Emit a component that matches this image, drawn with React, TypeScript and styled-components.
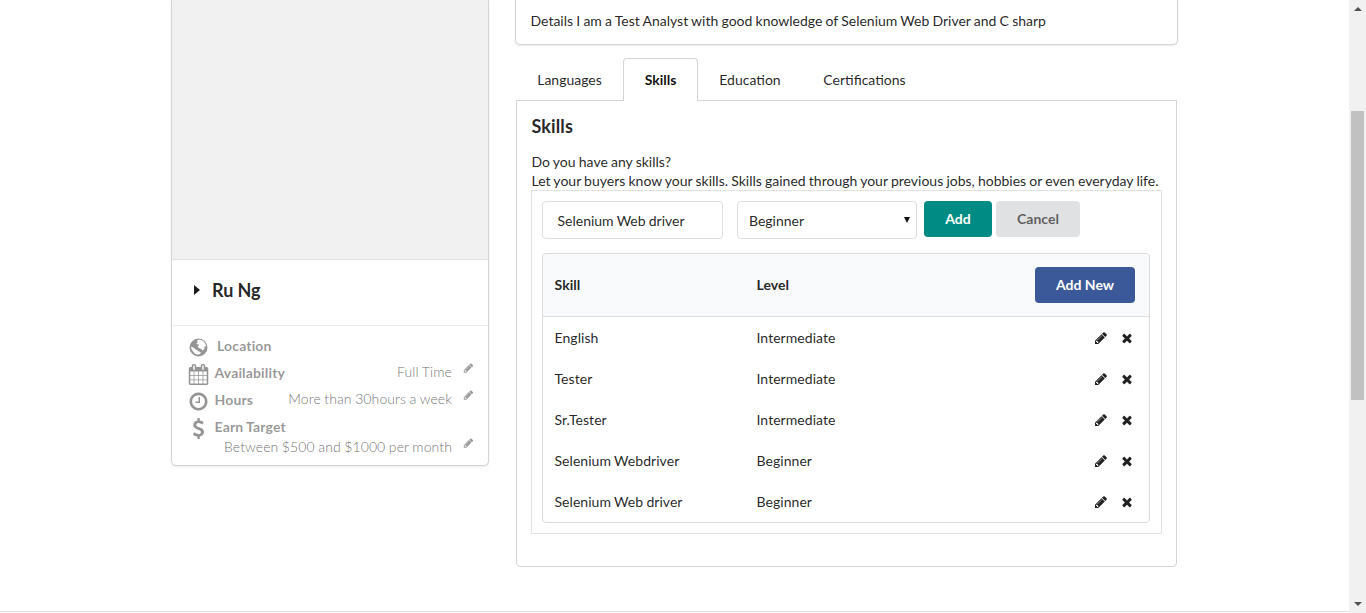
import React from "react";
import styled, { createGlobalStyle, css } from "styled-components";

const GlobalStyle = createGlobalStyle`
  *, *::before, *::after { box-sizing: border-box; }
  html, body { margin: 0; padding: 0; overflow: hidden; background: #fff; }
  body {
    font-family: Lato, "Liberation Sans", sans-serif;
    font-size: 14px;
    line-height: 20px;
    word-spacing: -0.4px;
    color: rgba(0, 0, 0, 0.87);
  }
`;

const Page = styled.div`
  display: flex;
  width: 1366px;
  height: 613px;
  overflow: hidden;
`;

const Content = styled.div`
  width: 1349px;
  display: flex;
  flex-direction: column;
`;

const Columns = styled.main`
  flex: 1;
  display: flex;
  align-items: flex-start;
  padding-left: 172px;
  gap: 28px;
`;

const Footer = styled.footer`
  height: 2px;
  border-top: 1px solid #dededf;
`;

const cardShadow = css`
  box-shadow: 0 1px 3px 0 #d4d4d5, 0 0 0 1px #d4d4d5;
`;

const ProfileCard = styled.aside`
  width: 316px;
  height: 465px;
  border-radius: 0 0 4px 4px;
  ${cardShadow}
`;

const Photo = styled.div`
  height: 259px;
  background: #f1f1f1;
`;

const NameRow = styled.div`
  height: 67px;
  display: flex;
  align-items: center;
  padding: 0 0 6px 22px;
  border-top: 1px solid #e0e0e1;
  border-bottom: 1px solid #ededed;
`;

const Caret = styled.span`
  width: 0;
  height: 0;
  border: 5px solid transparent;
  border-left: 6px solid #1b1c1d;
  border-right: 0;
  margin-right: 12px;
`;

const Name = styled.span`
  font-size: 18px;
  font-weight: 700;
  letter-spacing: 0.05px;
`;

const Facts = styled.div`
  padding: 8px 14px 0 16px;
  color: rgba(0, 0, 0, 0.42);
`;

const Fact = styled.div<{ $height?: number }>`
  display: flex;
  height: ${(p) => p.$height ?? 27}px;
  align-items: flex-start;
  padding-top: 2px;
`;

const FactIcon = styled.span`
  display: flex;
  width: 21px;
  height: 22px;
  justify-content: center;
  align-items: center;
`;

const FactLabel = styled.span<{ $inset?: number }>`
  flex: 1;
  font-weight: 700;
  letter-spacing: 0.15px;
  padding-left: ${(p) => p.$inset ?? 5.5}px;
`;

const FactValue = styled.span`
  font-weight: 300;
  letter-spacing: 0.1px;
  margin: -1px 11px 0 0;
  color: rgba(0, 0, 0, 0.6);
`;

const FactEdit = styled.span`
  display: flex;
  width: 11px;
  margin-top: -1px;
  color: rgba(0, 0, 0, 0.4);
`;

const Right = styled.div`
  width: 661px;
  display: flex;
  flex-direction: column;
`;

const Details = styled.div`
  height: 44px;
  padding: 11px 15px 0 14.5px;
  border-radius: 0 0 4px 4px;
  ${cardShadow}
`;

const Tabs = styled.nav`
  display: flex;
  height: 43px;
  margin-top: 14px;
  margin-bottom: -1px;
`;

const Tab = styled.a<{ $active?: boolean; $width: number }>`
  width: ${(p) => p.$width}px;
  height: 43px;
  display: flex;
  justify-content: center;
  padding-top: 11px;
  border: 1px solid transparent;
  border-bottom: 0;
  ${(p) =>
    p.$active &&
    css`
      font-weight: 700;
      color: rgba(0, 0, 0, 0.95);
      background: #fff;
      border-color: #d4d4d5;
      border-radius: 4px 4px 0 0;
      z-index: 1;
    `}
`;

const Panel = styled.section`
  width: 661px;
  height: 467px;
  border: 1px solid #d4d4d5;
  border-radius: 0 0 4px 4px;
  padding: 14px 14px 0;
`;

const PanelTitle = styled.h3`
  margin: 0;
  padding-left: 0.5px;
  font-size: 18px;
  line-height: 22px;
  font-weight: 700;
  letter-spacing: 0.1px;
`;

const Intro = styled.p`
  margin: 15px 0 0;
  padding-left: 0.5px;
  line-height: 19px;
  white-space: nowrap;
`;

const Frame = styled.div`
  width: 631px;
  height: 344px;
  border: 1px solid #e2e2e3;
  padding: 10px;
`;

const EditRow = styled.div`
  display: flex;
  align-items: flex-start;
  height: 52px;
`;

const Field = styled.div<{ $width: number; $inset: number; $gap: number }>`
  width: ${(p) => p.$width}px;
  height: 38px;
  display: flex;
  align-items: center;
  justify-content: space-between;
  padding: 2px 6px 0 ${(p) => p.$inset}px;
  margin-right: ${(p) => p.$gap}px;
  border: 1px solid #dededf;
  border-radius: 4px;
`;

const SelectArrow = styled.span`
  width: 0;
  height: 0;
  border: 3px solid transparent;
  border-top: 6px solid #111;
  border-bottom: 0;
  margin-top: -3px;
`;

const Button = styled.button<{ $tone: "teal" | "grey" | "blue"; $width: number }>`
  width: ${(p) => p.$width}px;
  height: 36px;
  padding: 0;
  margin-right: 4px;
  border: 0;
  border-radius: 4px;
  font: 700 14px/20px Lato, "Liberation Sans", sans-serif;
  color: ${(p) => (p.$tone === "grey" ? "rgba(0,0,0,.6)" : "#fff")};
  background: ${(p) => ({ teal: "#008c84", grey: "#e0e1e2", blue: "#3b5998" })[p.$tone]};
`;

const Table = styled.div`
  width: 608px;
  height: 270px;
  border: 1px solid #dadbdd;
  border-radius: 4px;
`;

const Row = styled.div<{ $head?: boolean }>`
  display: grid;
  grid-template-columns: 202px 1fr auto;
  align-items: center;
  height: 41px;
  padding: 0 ${(p) => (p.$head ? 10 : 15.5)}px 0 11.5px;
  letter-spacing: 0.05px;
  ${(p) =>
    p.$head &&
    css`
      height: 63px;
      font-weight: 700;
      background: #f9fafb;
      border-bottom: 1px solid #dededf;
      border-radius: 4px 4px 0 0;
    `}
`;

const Actions = styled.span`
  display: flex;
  align-items: center;
  gap: 11.5px;
`;

const Scrollbar = styled.div`
  width: 17px;
  height: 613px;
  display: flex;
  flex-direction: column;
  align-items: center;
  padding: 7px 0;
  background: #f1f1f1;
`;

const ScrollArrow = styled.span<{ $down?: boolean }>`
  width: 0;
  height: 0;
  border: 4px solid transparent;
  ${(p) =>
    p.$down
      ? "border-top-color:#505050;border-bottom:0;margin-top:auto;"
      : "border-bottom-color:#505050;border-top:0;"}
`;

const Thumb = styled.span`
  width: 13px;
  height: 289px;
  margin-top: 100px;
  background: #c1c1c1;
`;

const glyphs = {
  pencil:
    "M491 1536l91-91-235-235-91 91v107h128v128h107zm523-928q0-22-22-22-10 0-17 7l-542 542q-7 7-7 17 0 22 22 22 10 0 17-7l542-542q7-7 7-17zm-54-192l416 416-832 832h-416v-416zm683 96q0 53-37 90l-166 166-416-416 166-165q36-38 90-38 53 0 91 38l235 234q37 39 37 91z",
  times:
    "M1490 1322q0 40-28 68l-136 136q-28 28-68 28t-68-28l-294-294-294 294q-28 28-68 28t-68-28l-136-136q-28-28-28-68t28-68l294-294-294-294q-28-28-28-68t28-68l136-136q28-28 68-28t68 28l294 294 294-294q28-28 68-28t68 28l136 136q28 28 28 68t-28 68l-294 294 294 294q28 28 28 68z",
  calendar:
    "M192 1664h288v-288h-288v288zm352 0h320v-288h-320v288zm-352-352h288v-320h-288v320zm352 0h320v-320h-320v320zm-352-384h288v-288h-288v288zm736 736h320v-288h-320v288zm-384-736h320v-288h-320v288zm768 736h288v-288h-288v288zm-384-352h320v-320h-320v320zm-352-864v-288q0-13-9.500-22.500t-22.500-9.500h-64q-13 0-22.500 9.500t-9.500 22.500v288q0 13 9.500 22.500t22.500 9.500h64q13 0 22.500-9.500t9.500-22.500zm736 864h288v-320h-288v320zm-384-384h320v-288h-320v288zm384 0h288v-288h-288v288zm32-480v-288q0-13-9.500-22.500t-22.500-9.500h-64q-13 0-22.500 9.500t-9.500 22.500v288q0 13 9.500 22.500t22.500 9.500h64q13 0 22.500-9.500t9.500-22.500zm384-64v1280q0 52-38 90t-90 38h-1408q-52 0-90-38t-38-90v-1280q0-52 38-90t90-38h128v-96q0-66 47-113t113-47h64q66 0 113 47t47 113v96h384v-96q0-66 47-113t113-47h64q66 0 113 47t47 113v96h128q52 0 90 38t38 90z",
  clock:
    "M1024 544v448q0 14-9 23t-23 9h-320q-14 0-23-9t-9-23v-64q0-14 9-23t23-9h224v-352q0-14 9-23t23-9h64q14 0 23 9t9 23zm416 352q0-148-73-273t-198-198-273-73-273 73-198 198-73 273 73 273 198 198 273 73 273-73 198-198 73-273zm224 0q0 209-103 385.500t-279.500 279.500-385.500 103-385.500-103-279.500-279.500-103-385.500 103-385.500 279.500-279.500 385.500-103 385.500 103 279.500 279.500 103 385.500z",
  dollar:
    "M1362 1185q0 153-99.500 263.500t-258.500 136.500v175q0 14-9 23t-23 9h-135q-13 0-22.500-9.500t-9.500-22.500v-175q-66-9-127.500-31t-101.500-44.500-74-48-46.500-37.500-17.500-18q-17-21-2-41l103-135q7-10 23-12 15-2 24 9l2 2q113 99 243 125 37 8 74 8 81 0 142.500-43t61.500-122q0-28-15-53t-33.500-42-58.500-37.500-66-32-80-32.500q-39-16-61.500-25t-61.500-26.500-62.500-31-56.500-35.500-53.500-42.500-43.500-49-35.500-58-21-66.500-8.500-78q0-138 98-242t255-134v-180q0-13 9.500-22.500t22.500-9.500h135q14 0 23 9t9 23v176q57 6 110.500 23t87 33.500 63.500 37.500 39 29 15 14q17 18 5 38l-81 146q-8 15-23 16-14 3-27-7-3-3-14.500-12t-39-26.500-58.500-32-74.500-26-85.500-11.500q-95 0-155 43t-60 111q0 26 8.500 48t29.500 41.500 39.500 33 56 31 60.500 27 70 27.500q53 20 81 31.500t76 35 75.500 42.500 62 50 53 63.500 31.500 76.500 13 94z",
  globe:
    "M896 128a768 768 0 1 0 0 1536a768 768 0 1 0 0-1536zM860 240L1050 230L1250 320L1400 450L1510 630L1560 830L1470 770L1390 830L1420 950L1330 1080L1230 1150L1130 1020L990 960L850 880L830 780L950 680L900 610L790 650L720 560L820 450L770 340zM270 800L390 880L520 940L640 1040L760 1110L860 1190L1000 1250L1110 1330L1020 1440L860 1500L700 1470L560 1400L480 1270L370 1150L290 1000z",
};

type GlyphName = keyof typeof glyphs;

const Glyph = ({ name, size }: { name: GlyphName; size: number }) => (
  <svg
    width={size}
    height={size}
    viewBox="0 0 1792 1792"
    fill="currentColor"
    fillRule={name === "globe" ? "evenodd" : "nonzero"}
    aria-hidden="true"
  >
    <path d={glyphs[name]} />
  </svg>
);

const skills = [
  ["English", "Intermediate"],
  ["Tester", "Intermediate"],
  ["Sr.Tester", "Intermediate"],
  ["Selenium Webdriver", "Beginner"],
  ["Selenium Web driver", "Beginner"],
];

export default function App() {
  return (
    <>
      <GlobalStyle />
      <Page>
        <Content>
          <Columns>
            <ProfileCard>
              <Photo />
              <NameRow>
                <Caret />
                <Name>Ru Ng</Name>
              </NameRow>
              <Facts>
                <Fact>
                  <FactIcon><Glyph name="globe" size={21} /></FactIcon>
                  <FactLabel $inset={8}>Location</FactLabel>
                </Fact>
                <Fact>
                  <FactIcon><Glyph name="calendar" size={21} /></FactIcon>
                  <FactLabel>Availability</FactLabel>
                  <FactValue>Full Time</FactValue>
                  <FactEdit><Glyph name="pencil" size={12} /></FactEdit>
                </Fact>
                <Fact>
                  <FactIcon><Glyph name="clock" size={21} /></FactIcon>
                  <FactLabel>Hours</FactLabel>
                  <FactValue>More than 30hours a week</FactValue>
                  <FactEdit><Glyph name="pencil" size={12} /></FactEdit>
                </Fact>
                <Fact $height={21}>
                  <FactIcon><Glyph name="dollar" size={21} /></FactIcon>
                  <FactLabel>Earn Target</FactLabel>
                </Fact>
                <Fact>
                  <FactLabel />
                  <FactValue>Between $500 and $1000 per month</FactValue>
                  <FactEdit><Glyph name="pencil" size={12} /></FactEdit>
                </Fact>
              </Facts>
            </ProfileCard>
            <Right>
              <Details>Details I am a Test Analyst with good knowledge of Selenium Web Driver and C sharp</Details>
              <Tabs>
                <Tab $width={107}>Languages</Tab>
                <Tab $active $width={75}>Skills</Tab>
                <Tab $width={104}>Education</Tab>
                <Tab $width={125}>Certifications</Tab>
              </Tabs>
              <Panel>
                <PanelTitle>Skills</PanelTitle>
                <Intro>
                  Do you have any skills?
                  <br />
                  Let your buyers know your skills. Skills gained through your previous jobs, hobbies or even everyday life.
                </Intro>
                <Frame>
                  <EditRow>
                    <Field $width={181} $inset={14.5} $gap={14}>Selenium Web driver</Field>
                    <Field $width={180} $inset={11} $gap={7}>
                      Beginner
                      <SelectArrow />
                    </Field>
                    <Button $tone="teal" $width={68}>Add</Button>
                    <Button $tone="grey" $width={84}>Cancel</Button>
                  </EditRow>
                  <Table>
                    <Row $head>
                      <span>Skill</span>
                      <span>Level</span>
                      <Button $tone="blue" $width={100}>Add New</Button>
                    </Row>
                    {skills.map(([skill, level]) => (
                      <Row key={skill}>
                        <span>{skill}</span>
                        <span>{level}</span>
                        <Actions>
                          <Glyph name="pencil" size={14} />
                          <Glyph name="times" size={14} />
                        </Actions>
                      </Row>
                    ))}
                  </Table>
                </Frame>
              </Panel>
            </Right>
          </Columns>
          <Footer />
        </Content>
        <Scrollbar>
          <ScrollArrow />
          <Thumb />
          <ScrollArrow $down />
        </Scrollbar>
      </Page>
    </>
  );
}
